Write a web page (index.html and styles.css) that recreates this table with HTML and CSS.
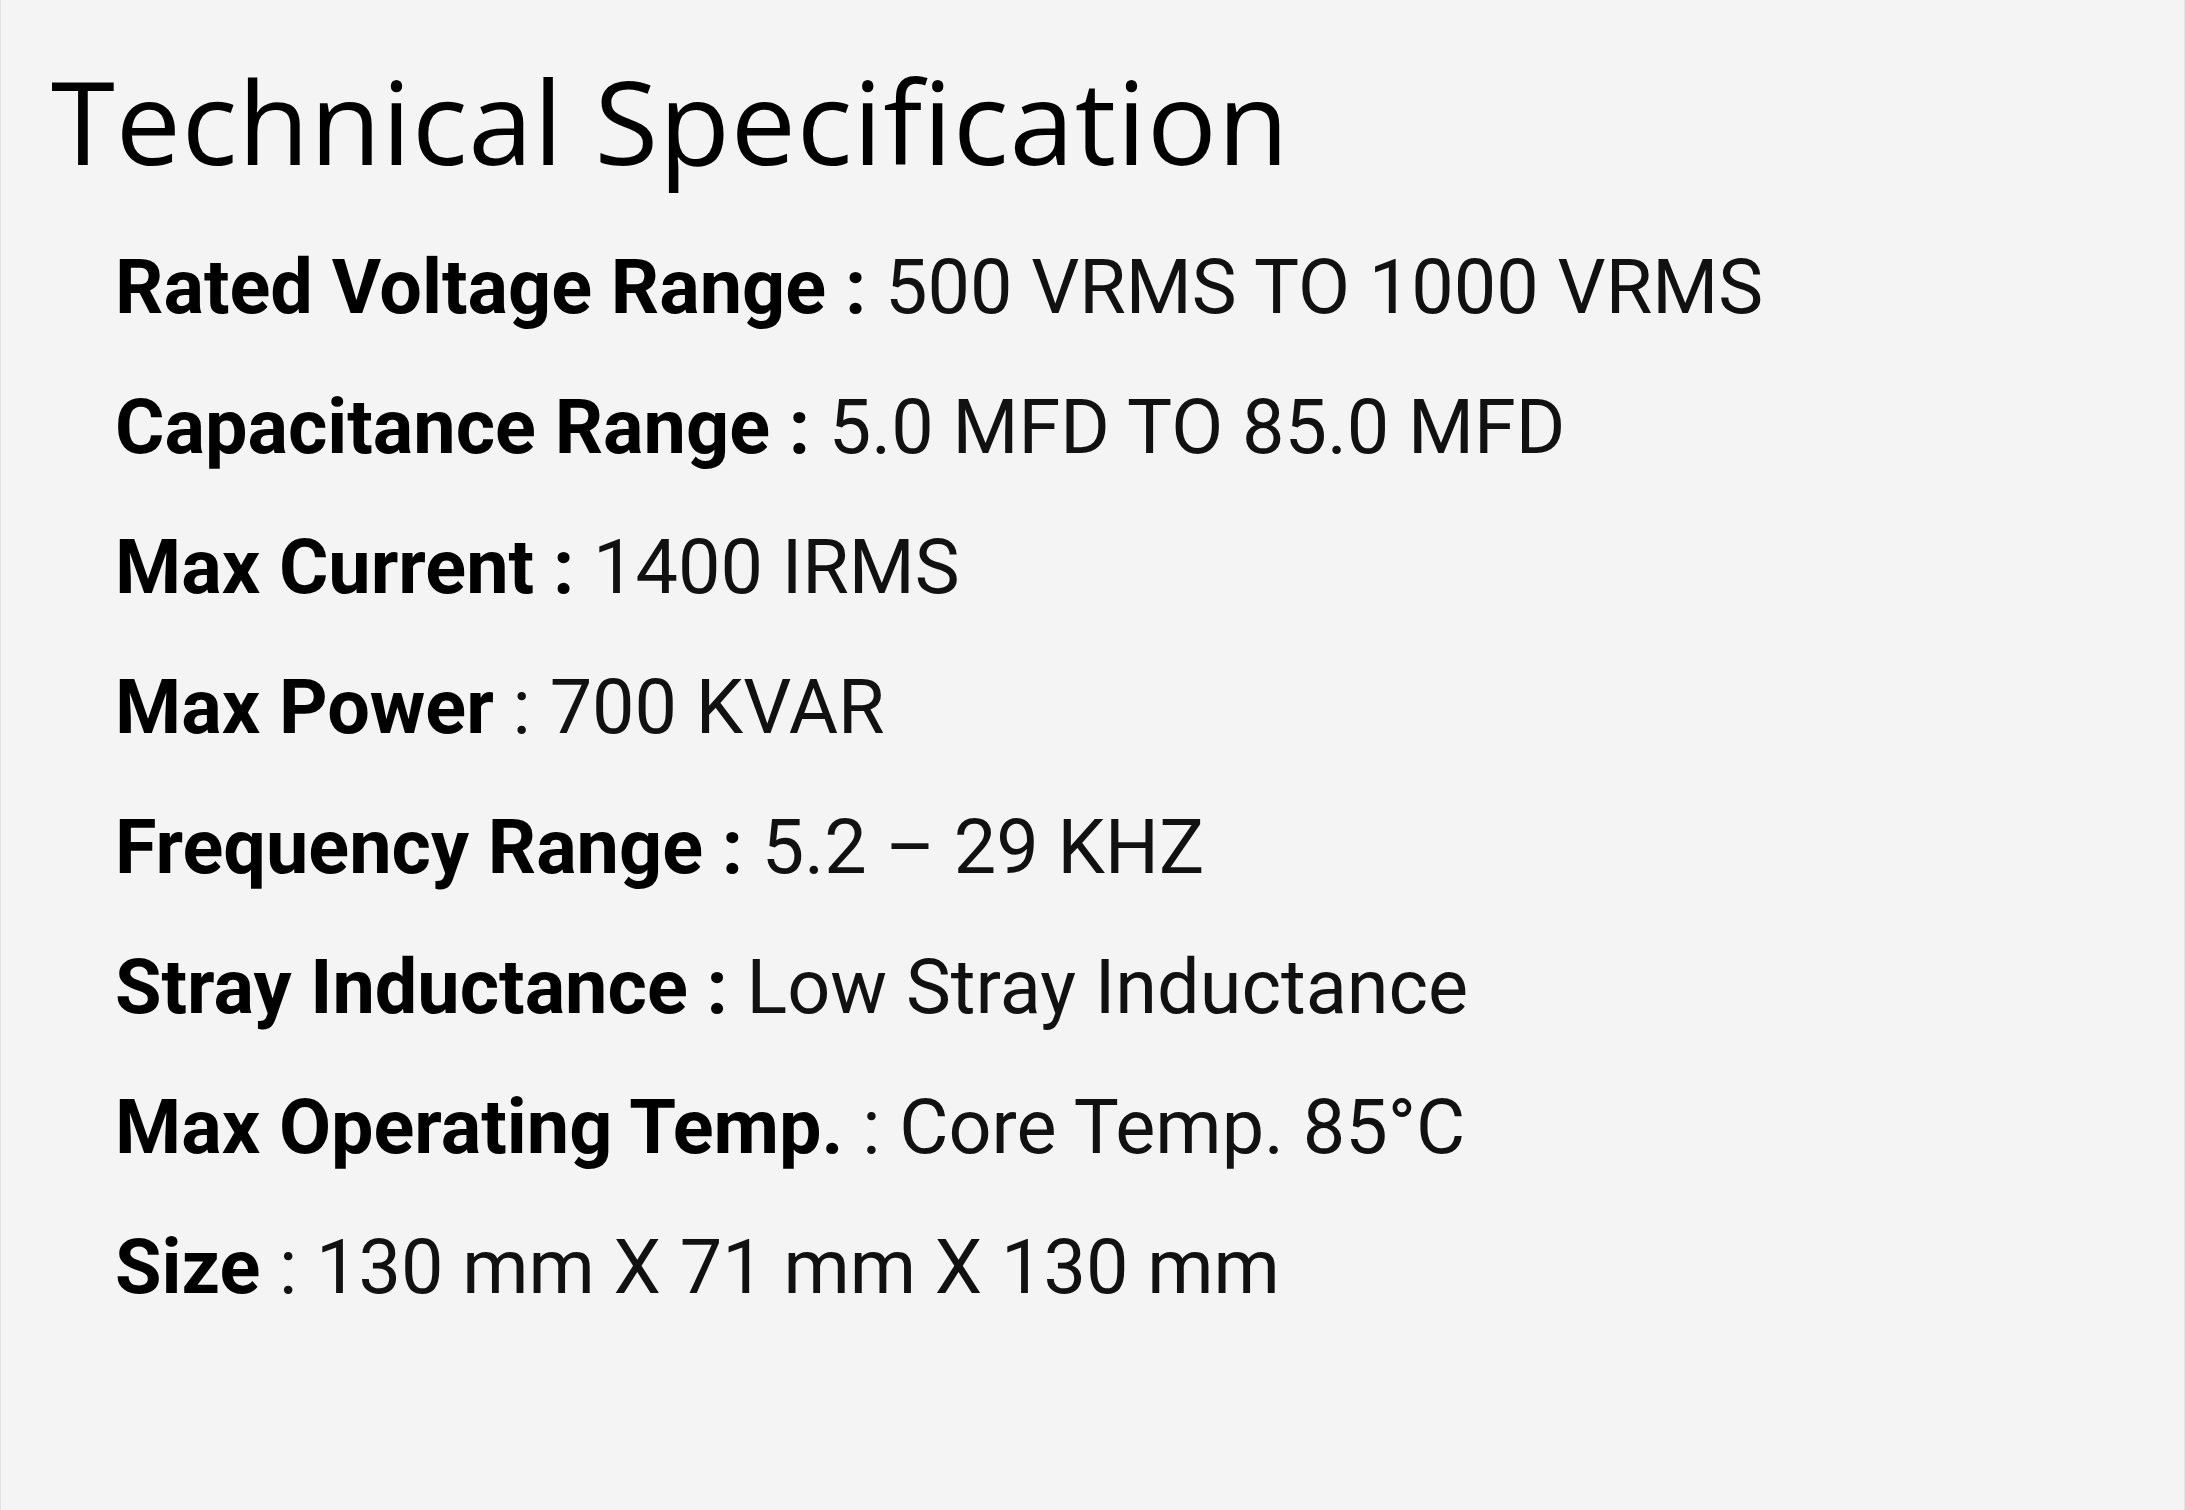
FILE: index.html
```html
<!DOCTYPE html>
<html lang="en">
<head>
    <meta charset="UTF-8">
    <meta name="viewport" content="width=device-width, initial-scale=1.0">
    <title>Technical Specification</title>
    <link rel="stylesheet" href="styles.css">
</head>
<body>
    <div class="spec">
        <h1>Technical Specification</h1>

        <ul class="spec-list">
            <li><b>Rated Voltage Range :</b> 500 VRMS TO 1000 VRMS</li>
            <li><b>Capacitance Range :</b> 5.0 MFD TO 85.0 MFD</li>
            <li><b>Max Current :</b> 1400 IRMS</li>
            <li><b>Max Power</b> : 700 KVAR</li>
            <li><b>Frequency Range :</b> 5.2 &ndash; 29 KHZ</li>
            <li><b>Stray Inductance :</b> Low Stray Inductance</li>
            <li><b>Max Operating Temp.</b> : Core Temp. 85&deg;C</li>
            <li><b>Size</b> : 130 mm X 71 mm X 130 mm</li>
        </ul>
    </div>
</body>
</html>
```

FILE: styles.css
```css
* {
    margin: 0;
    padding: 0;
    box-sizing: border-box;
}

html, body {
    height: 100%;
}

body {
    background-color: #f4f4f4;
    color: #000;
}

.spec {
    min-height: 100%;
    border-left: 1px solid #e4e4e4;
    border-right: 1px solid #e4e4e4;
    padding-top: 50px;
}

h1 {
    font-family: "Open Sans", sans-serif;
    font-weight: 400;
    font-size: 116px;
    line-height: 140px;
    letter-spacing: 0.8px;
    padding-left: 50px;
    margin-bottom: 27px;
}

.spec-list {
    list-style: none;
    padding-left: 114px;
    font-family: Roboto, "Liberation Sans", sans-serif;
    font-size: 75.6px;
    line-height: 140px;
    color: #111;
}

.spec-list b {
    font-weight: 700;
    color: #000;
}
```
